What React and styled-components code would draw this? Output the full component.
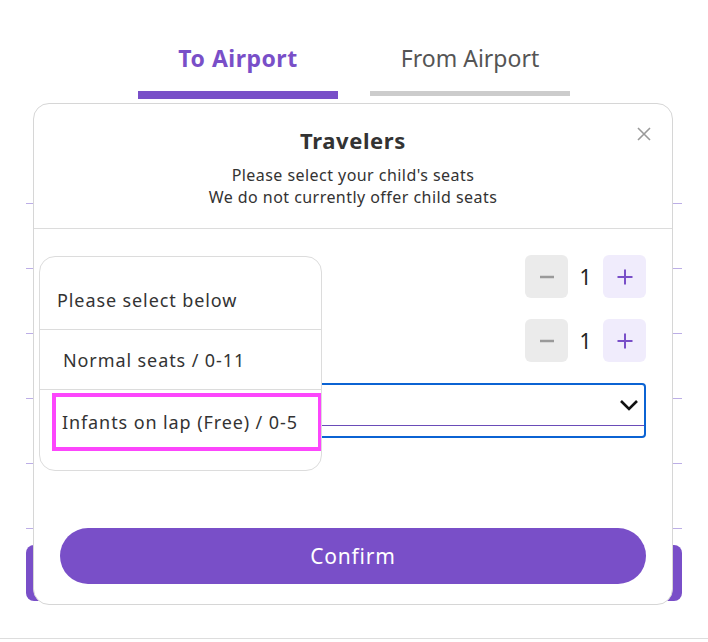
import React from 'react';
import styled, { createGlobalStyle } from 'styled-components';

const GlobalStyle = createGlobalStyle`
  * { box-sizing: border-box; }
  body {
    margin: 0;
    background: #fff;
    font-family: "Noto Sans", "Liberation Sans", sans-serif;
    color: #333;
  }
`;

const purple = '#794fc8';

const Page = styled.div`
  position: relative;
  width: 708px;
  height: 642px;
  overflow: hidden;
`;

const Tabs = styled.div`
  display: flex;
  justify-content: center;
  gap: 32px;
`;

const Tab = styled.div`
  width: 200px;
  padding-top: 42px;
  display: flex;
  flex-direction: column;
  align-items: center;
`;

const TabLabel = styled.div`
  height: 32px;
  line-height: 32px;
  font-size: 23px;
  font-weight: ${p => (p.$active ? 700 : 400)};
  letter-spacing: ${p => (p.$active ? 0.5 : 0)}px;
  color: ${p => (p.$active ? purple : '#555')};
`;

const TabBar = styled.div`
  margin-top: 17px;
  width: 100%;
  height: ${p => (p.$active ? 8 : 5)}px;
  background: ${p => (p.$active ? purple : '#cccccc')};
`;

const Form = styled.div`
  margin: 40px 26px 0;
`;

const FormRow = styled.div`
  height: 65px;
  border-bottom: 1px solid #bcaee6;
`;

const SubmitBar = styled.div`
  margin: 16px 26px 0;
  height: 56px;
  border-radius: 8px;
  background: ${purple};
`;

const Footer = styled.div`
  margin-top: 37px;
  border-top: 1px solid #dddddd;
`;

const Modal = styled.div`
  position: absolute;
  left: 33px;
  top: 103px;
  width: 640px;
  height: 502px;
  background: #fff;
  border: 1px solid #d6d6d6;
  border-radius: 16px;
  display: flex;
  flex-direction: column;
`;

const Header = styled.div`
  position: relative;
  padding: 21px 0 20px;
  text-align: center;
  border-bottom: 1px solid #dcdcdc;
`;

const Title = styled.div`
  font-size: 22px;
  font-weight: 700;
  letter-spacing: 0.6px;
  line-height: 30px;
  color: #333;
`;

const Subtitle = styled.div`
  margin-top: 9px;
  font-size: 16px;
  letter-spacing: 0.45px;
  line-height: 22px;
  color: #333;
`;

const Close = styled.button`
  position: absolute;
  right: 18px;
  top: 20px;
  width: 20px;
  height: 20px;
  padding: 0;
  border: none;
  background: none;
  display: flex;
  align-items: center;
  justify-content: center;
`;

const Body = styled.div`
  flex: 1;
  padding: 26px 26px 20px;
  display: flex;
  flex-direction: column;
  gap: 21px;
`;

const Row = styled.div`
  display: flex;
  align-items: center;
  justify-content: flex-end;
  height: 43px;
`;

const Stepper = styled.div`
  display: flex;
  align-items: center;
`;

const StepButton = styled.div`
  width: 43px;
  height: 43px;
  border-radius: 6px;
  background: ${p => (p.$plus ? '#f0ecfc' : '#ebebeb')};
  display: flex;
  align-items: center;
  justify-content: center;
`;

const Count = styled.div`
  width: 35px;
  text-align: center;
  font-size: 21px;
  color: #222;
`;

const SelectRing = styled.div`
  margin-left: 230px;
  height: 55px;
  border: 2px solid #0b63d3;
  border-radius: 4px;
`;

const SelectField = styled.div`
  height: 41px;
  border-bottom: 1px solid #6a4cb8;
  display: flex;
  align-items: center;
  justify-content: flex-end;
  padding-right: 5px;
`;

const Confirm = styled.button`
  margin-top: auto;
  height: 56px;
  border: none;
  border-radius: 28px;
  background: ${purple};
  color: #fff;
  font-family: inherit;
  font-size: 21px;
  letter-spacing: 0.8px;
`;

const Dropdown = styled.div`
  position: absolute;
  left: 5px;
  top: 152px;
  width: 283px;
  height: 215px;
  background: #fff;
  border: 1px solid #dcdcdc;
  border-radius: 16px;
  padding-top: 14px;
  overflow: hidden;
`;

const Option = styled.div`
  height: ${p => p.$h}px;
  display: flex;
  align-items: center;
  padding-left: ${p => p.$pad}px;
  font-size: 18px;
  letter-spacing: 0.9px;
  color: #333;
  border-bottom: ${p => (p.$divider ? '1px solid #dcdcdc' : 'none')};
`;

const Highlight = styled.div`
  margin: 1px -1px 0 0;
  height: 58px;
  flex: 1;
  border: 4px solid #fc46fc;
  display: flex;
  align-items: center;
  padding-left: 6px;
`;

const Minus = () => (
  <svg width="16" height="16" viewBox="0 0 16 16">
    <line x1="1" y1="8" x2="15" y2="8" stroke="#9a9a9a" strokeWidth="2.5" />
  </svg>
);

const Plus = () => (
  <svg width="16" height="16" viewBox="0 0 16 16">
    <line x1="0.5" y1="8" x2="15.5" y2="8" stroke={purple} strokeWidth="2" />
    <line x1="8" y1="0.5" x2="8" y2="15.5" stroke={purple} strokeWidth="2" />
  </svg>
);

const Counter = () => (
  <Stepper>
    <StepButton><Minus /></StepButton>
    <Count>1</Count>
    <StepButton $plus><Plus /></StepButton>
  </Stepper>
);

export default function App() {
  return (
    <Page>
      <GlobalStyle />
      <Tabs>
        <Tab>
          <TabLabel $active>To Airport</TabLabel>
          <TabBar $active />
        </Tab>
        <Tab>
          <TabLabel>From Airport</TabLabel>
          <TabBar />
        </Tab>
      </Tabs>
      <Form>
        {[0, 1, 2, 3, 4, 5].map(i => <FormRow key={i} />)}
      </Form>
      <SubmitBar />
      <Footer />

      <Modal>
        <Header>
          <Title>Travelers</Title>
          <Subtitle>
            Please select your child's seats
            <br />
            We do not currently offer child seats
          </Subtitle>
          <Close aria-label="close">
            <svg width="16" height="16" viewBox="0 0 16 16">
              <path d="M2 2L14 14M14 2L2 14" stroke="#9a9a9a" strokeWidth="1.6" />
            </svg>
          </Close>
        </Header>
        <Body>
          <Row>
            <Counter />
          </Row>
          <Row>
            <Counter />
          </Row>
          <SelectRing>
            <SelectField>
              <svg width="20" height="12" viewBox="0 0 20 12">
                <path d="M2 2L10 10L18 2" fill="none" stroke="#111" strokeWidth="2.6" />
              </svg>
            </SelectField>
          </SelectRing>
          <Confirm>Confirm</Confirm>
        </Body>
        <Dropdown>
          <Option $h={59} $pad={17} $divider>Please select below</Option>
          <Option $h={60} $pad={23} $divider>Normal seats / 0-11</Option>
          <Option $h={62} $pad={12}>
            <Highlight>Infants on lap (Free) / 0-5</Highlight>
          </Option>
        </Dropdown>
      </Modal>
    </Page>
  );
}
